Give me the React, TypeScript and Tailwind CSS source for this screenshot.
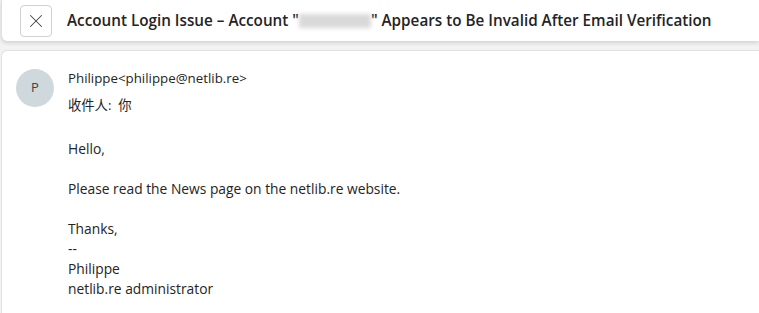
import { X } from 'lucide-react'

const font = { fontFamily: '"Segoe UI", "Open Sans", "Noto Sans CJK SC", sans-serif' }

function Header() {
  return (
    <div className="relative z-10 flex h-[41px] items-center rounded-bl-md border-l border-[#e0e0e0] bg-white pl-[18px] shadow-[0_2px_4px_rgba(0,0,0,0.14)]">
      <button className="flex h-[32px] w-[32px] items-center justify-center rounded-[4px] border border-[#d1d1d1] bg-white text-[#424242]">
        <X size={22} strokeWidth={1.1} />
      </button>
      <h1 className="ml-[15px] whitespace-nowrap text-[15.25px] font-semibold text-[#242424]">
        Account Login Issue – Account "
        <span className="inline-block h-[14px] w-[72px] translate-y-[2px] bg-[#d9d9d9] blur-[2px]" />
        " Appears to Be Invalid After Email Verification
      </h1>
    </div>
  )
}

function Message() {
  return (
    <div className="flex-1 rounded-tl-md border-l border-t border-[#e0e0e0] bg-white">
      <div className="flex pl-[14px] pt-[18px]">
        <div className="flex h-[38px] w-[38px] shrink-0 items-center justify-center rounded-full bg-[#cfd8dc] text-[13px] font-medium text-[#424242]">
          P
        </div>
        <div className="ml-[14px] text-[13.3px] text-[#242424]">
          <p className="leading-[18px]">Philippe&lt;philippe@netlib.re&gt;</p>
          <p className="mt-[9px] leading-[18px]">收件人:&nbsp;&nbsp;你</p>
        </div>
      </div>
      <div className="mt-[25px] pl-[66px] text-[13.8px] leading-[20px] text-[#242424]">
        <p>Hello,</p>
        <p>&nbsp;</p>
        <p>Please read the News page on the netlib.re website.</p>
        <p>&nbsp;</p>
        <p>Thanks,</p>
        <p>--</p>
        <p>Philippe</p>
        <p>netlib.re administrator</p>
      </div>
    </div>
  )
}

export default function App() {
  return (
    <div className="flex h-[313px] w-[759px] flex-col gap-[9px] overflow-hidden bg-[#f3f3f3] pl-[1px]" style={font}>
      <Header />
      <Message />
    </div>
  )
}
